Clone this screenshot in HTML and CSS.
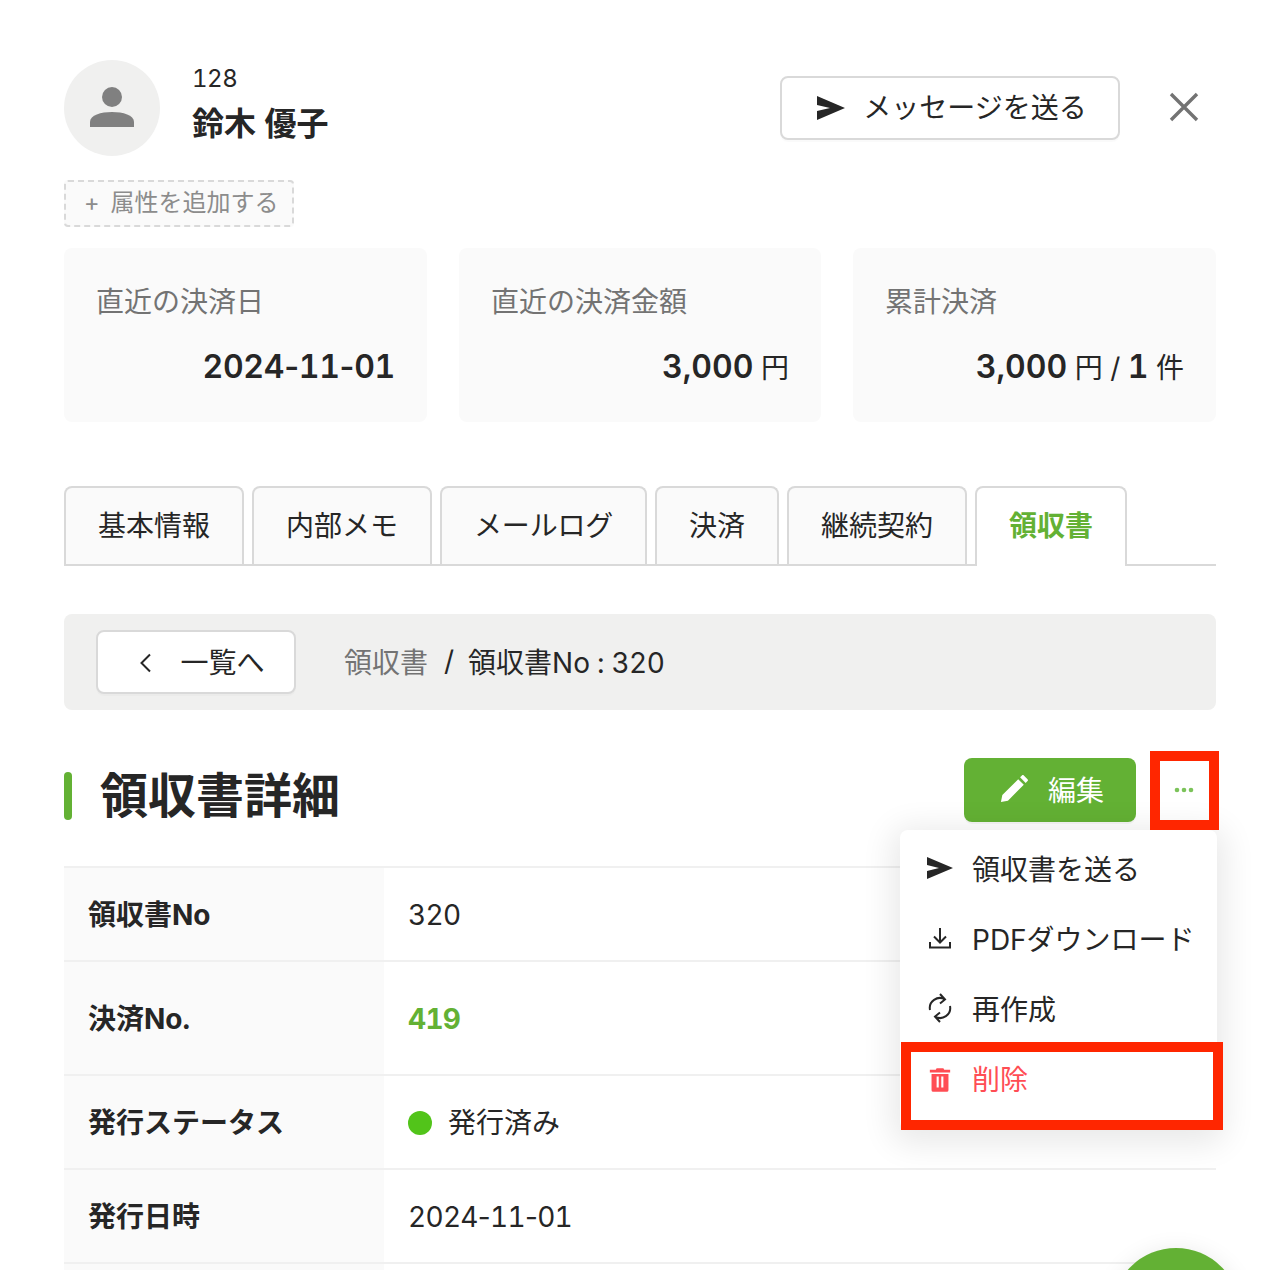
FILE: index.html
```html
<!DOCTYPE html>
<html lang="ja">
<head>
<meta charset="utf-8">
<title>領収書詳細</title>
<link rel="stylesheet" href="styles.css">
</head>
<body>
<main class="page">
  <header class="head">
    <div class="avatar">
      <svg width="48" height="48" viewBox="0 0 48 48"><circle cx="24" cy="13" r="10" fill="#808080"/><path d="M2 43v-5c0-7 11-10 22-10s22 3 22 10v5z" fill="#808080"/></svg>
    </div>
    <div class="who">
      <div class="num">128</div>
      <div class="name">鈴木 優子</div>
    </div>
    <button class="btn msg">
      <svg class="send" width="30" height="24" viewBox="0 0 30 24"><path d="M1 0l28 12L1 24l0-9 13-3L1 9z" fill="#262626"/></svg>
      <span>メッセージを送る</span>
    </button>
    <div class="close">
      <svg width="32" height="32" viewBox="0 0 32 32"><path d="M3 3l26 26M29 3L3 29" stroke="#737373" stroke-width="3.4" fill="none"/></svg>
    </div>
  </header>

  <div class="tag"><span class="plus">+</span>属性を追加する</div>

  <section class="stats">
    <div class="stat"><div class="stat-label">直近の決済日</div><div class="stat-value"><b class="date-b">2024<span class="hy">-</span>11<span class="hy">-</span>01</b></div></div>
    <div class="stat"><div class="stat-label">直近の決済金額</div><div class="stat-value"><b>3,000</b> 円</div></div>
    <div class="stat"><div class="stat-label">累計決済</div><div class="stat-value"><b>3,000</b> 円 / <b>1</b> 件</div></div>
  </section>

  <nav class="tabs">
    <div class="tab">基本情報</div>
    <div class="tab">内部メモ</div>
    <div class="tab tab-tight">メールログ</div>
    <div class="tab">決済</div>
    <div class="tab">継続契約</div>
    <div class="tab active">領収書</div>
  </nav>

  <div class="crumbbar">
    <button class="btn back">
      <svg width="14" height="20" viewBox="0 0 14 20"><path d="M12 1.500L3.500 10l8.500 8.500" stroke="#262626" stroke-width="2" fill="none"/></svg>
      <span>一覧へ</span>
    </button>
    <div class="crumbs"><span class="crumb-link">領収書</span><span class="sep">/</span><span class="crumb-now">領収書No : <span class="nums">320</span></span></div>
  </div>

  <div class="title-row">
    <h1 class="title">領収書詳細</h1>
    <button class="edit">
      <svg width="28" height="28" viewBox="1 1 30 30"><path d="M2 30l1.500-7.500L20.500 5.500l6 6L9.500 28.500zM22.500 3.500l2-2c.6-.6 1.400-.6 2 0l4 4c.6.6.6 1.400 0 2l-2 2z" fill="#fff"/></svg>
      <span>編集</span>
    </button>
    <button class="more">
      <svg width="20" height="6" viewBox="0 0 20 6"><circle cx="3" cy="3" r="2.300" fill="#7cc35a"/><circle cx="10" cy="3" r="2.300" fill="#7cc35a"/><circle cx="17" cy="3" r="2.300" fill="#7cc35a"/></svg>
    </button>
  </div>

  <table class="info">
    <tr class="r1"><th>領収書No</th><td>320</td></tr>
    <tr class="r2"><th>決済No.</th><td><a class="link">419</a></td></tr>
    <tr class="r3"><th>発行ステータス</th><td class="status"><span class="dot"></span>発行済み</td></tr>
    <tr class="r3"><th>発行日時</th><td>2024<span class="hy">-</span>11<span class="hy">-</span>01</td></tr>
    <tr class="r3"><th></th><td></td></tr>
  </table>
</main>

<ul class="menu">
  <li class="item">
    <svg width="26" height="22" viewBox="0 0 26 22"><path d="M0 0l26 11L0 22l0-8 12-3L0 8z" fill="#262626"/></svg>
    <span>領収書を送る</span>
  </li>
  <li class="item">
    <svg width="26" height="26" viewBox="0 0 26 26"><path d="M13 3v14M7 11.500l6 6 6-6M3 17v5.500h20V17" stroke="#262626" stroke-width="2" fill="none"/></svg>
    <span>PDFダウンロード</span>
  </li>
  <li class="item">
    <svg width="26" height="30" viewBox="0 0 26 30"><path d="M3 17A10 10 0 0 1 18 6.500M23 13A10 10 0 0 1 8 23.500M13 1l5 5.500-5 4M13 29l-5-5.500 5-4" stroke="#262626" stroke-width="2" fill="none"/></svg>
    <span>再作成</span>
  </li>
  <li class="item danger">
    <svg class="trash" width="22" height="24" viewBox="0 0 26 28"><path fill-rule="evenodd" d="M1 2h7l1-2h8l1 2h7v3H1zM3 7h20v19a2 2 0 0 1-2 2H5a2 2 0 0 1-2-2zM9 10v13h2.500V10zM14.500 10v13H17V10z" fill="#ff4d54"/></svg>
    <span>削除</span>
  </li>
</ul>

<div class="mark mark-more"></div>
<div class="mark mark-delete"></div>
<div class="fab"></div>
</body>
</html>
```

FILE: styles.css
```css
* { box-sizing: border-box; }
html, body { margin: 0; height: 1270px; overflow: hidden; background: #fff; }
body {
  position: relative;
  font-family: Inter, "Noto Sans CJK JP", sans-serif;
  font-variant-numeric: tabular-nums;
  color: #262626;
  font-size: 28px;
}
button { font: inherit; color: inherit; cursor: pointer; }
.page { padding: 60px 50px 0 64px; height: 1270px; overflow: hidden; }

.head { display: flex; align-items: flex-start; height: 96px; }
.avatar {
  width: 96px; height: 96px; border-radius: 50%; background: #f0f0ef;
  display: flex; align-items: center; justify-content: center;
}
.who { margin-left: 33px; flex: 1; }
.num { font-size: 24px; line-height: 36px; margin: 1px 0 0 -1px; letter-spacing: -.5px; }
.name { font-size: 32px; font-weight: 700; line-height: 46px; margin: 4px 0 0 -1px; }

.btn {
  background: #fff; border: 2px solid #d9d9d9; border-radius: 8px;
  box-shadow: 0 2px 0 rgba(0,0,0,.02);
  display: flex; align-items: center; justify-content: center;
}
.msg { width: 340px; height: 64px; margin-top: 16px; gap: 17px; padding-bottom: 5px; }
.send { flex: none; margin: 4px 0 0 3px; }
.close { width: 32px; height: 32px; margin: 31px 16px 0 48px; display: flex; }

.tag {
  width: 230px; height: 47px; margin-top: 24px;
  background: #fafafa; border: 2px dashed #d9d9d9; border-radius: 4px;
  color: #8c8c8c; font-size: 24px; line-height: 41px; padding-left: 18px; white-space: nowrap;
}
.plus { margin-right: 11px; }

.stats { display: grid; grid-template-columns: 363px 362px 363px; gap: 32px; margin-top: 21px; }
.stat { height: 174px; background: #fafafa; border-radius: 8px; padding: 33px 32px 32px; }
.stat-label { color: #737373; line-height: 42px; }
.stat-value { text-align: right; line-height: 48px; margin-top: 20px; white-space: nowrap; }
.stat-value b { font-size: 32px; font-weight: 600; }
.stat-value .date-b { letter-spacing: -.3px; }
.hy { font-variant-numeric: normal; }

.tabs { display: flex; gap: 8px; margin-top: 64px; height: 80px; border-bottom: 2px solid #d9d9d9; }
.tab {
  height: 78px; padding: 0 32px; background: #fafafa;
  border: 2px solid #d9d9d9; border-bottom: 0; border-radius: 8px 8px 0 0;
  line-height: 76px; white-space: nowrap;
}
.tab-tight { letter-spacing: -.2px; }
.tab.active { background: #fff; color: #63b134; font-weight: 700; height: 80px; }

.crumbbar {
  display: flex; align-items: center; height: 96px; margin-top: 48px; padding-left: 32px;
  background: #f0f0ef; border-radius: 8px;
}
.back { width: 200px; height: 64px; gap: 28px; padding: 0 0 2px 10px; }
.back svg { margin: 3px 0 0 1px; }
.crumbs { margin-left: 48px; display: flex; align-items: center; padding-bottom: 2px; }
.crumb-link { color: #737373; }
.sep { margin: 0 14px 0 16px; }
.crumb-now { word-spacing: -.5px; }
.nums { letter-spacing: -.6px; }

.title-row { display: flex; align-items: center; margin-top: 48px; height: 64px; }
.title {
  flex: 1; margin: 12px 0 0; font-size: 48px; font-weight: 700; line-height: 48px; height: 48px;
  padding-left: 36px; position: relative;
}
.title::before {
  content: ""; position: absolute; left: 0; top: 0; width: 8px; height: 48px;
  border-radius: 4px; background: #63b134;
}
.edit {
  width: 172px; height: 64px; background: #63b134; border: 0; border-radius: 8px; color: #fff;
  display: flex; align-items: center; justify-content: center; gap: 20px; padding: 0 0 3px 4px;
  box-shadow: 0 2px 0 rgba(0,0,0,.04);
}
.more {
  width: 64px; height: 64px; margin-left: 16px; padding: 0; border: 0; background: #fff;
  display: flex; align-items: center; justify-content: center;
}

.info { width: 100%; border-collapse: collapse; margin-top: 44px; }
.info tr { border-top: 2px solid #f0f0f0; }
.info th {
  width: 320px; background: #fafafa; text-align: left; font-weight: 700;
  padding: 0 24px 3px;
}
.info td { padding: 1px 24px 0; letter-spacing: -.7px; }
.info td.status { padding: 0 24px 2px; letter-spacing: 0; }
.r1 { height: 94px; }
.r2 { height: 114px; }
.r3 { height: 94px; }
.link { color: #63b134; font-weight: 700; }
.dot {
  display: inline-block; width: 24px; height: 24px; border-radius: 50%;
  background: #52c41a; margin-right: 16px; vertical-align: -2px;
}

.menu {
  position: absolute; left: 900px; top: 830px; width: 317px; height: 300px; margin: 0; padding: 3px 0 0;
  list-style: none; background: #fff; border-radius: 8px;
  box-shadow: 0 6px 32px 8px rgba(0,0,0,.09);
}
.item { display: flex; align-items: center; height: 70px; padding-left: 27px; gap: 19px; white-space: nowrap; }
.item svg { flex: none; }
.item .trash { margin: 4px 2px 0; }
.danger { color: #ff4d54; }

.mark { position: absolute; border: 10px solid #ff2600; }
.mark-more { left: 1150px; top: 751px; width: 69px; height: 79px; }
.mark-delete { left: 901px; top: 1042px; width: 322px; height: 88px; }

.fab {
  position: absolute; left: 1112px; top: 1248px; width: 128px; height: 128px; border-radius: 50%;
  background: #63b134; box-shadow: 0 4px 24px rgba(0,0,0,.1);
}
```
